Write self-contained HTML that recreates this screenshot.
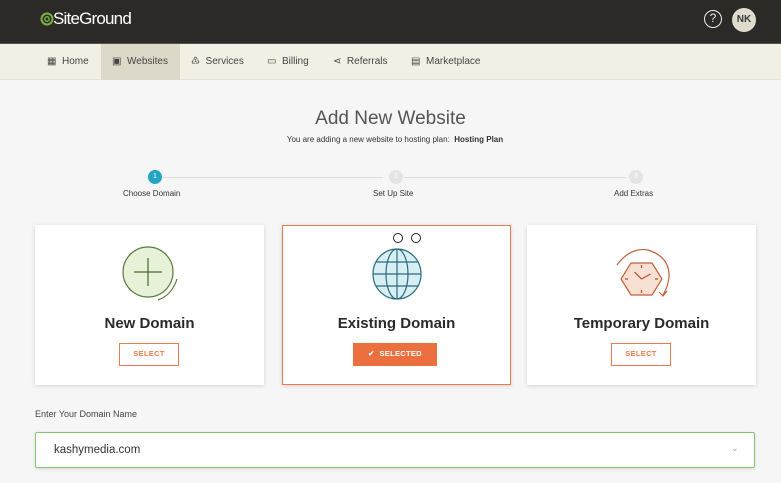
<!DOCTYPE html>
<html><head><meta charset="utf-8"><style>
*{margin:0;padding:0;box-sizing:border-box}
body{width:781px;height:483px;overflow:hidden;background:#f6f6f6;font-family:"Liberation Sans",sans-serif;position:relative;color:#333}
.hdr{position:absolute;left:0;top:0;width:781px;height:43px;background:#2b2a27}
.nav{position:absolute;left:0;top:43px;width:781px;height:37px;background:#f2f0e4;border-top:1px solid #555;border-bottom:1px solid #e6e4d8}
.nav .it{position:absolute;top:0;height:36px;line-height:35px;font-size:10px;color:#444}
.act{position:absolute;left:101px;top:0;width:79px;height:36px;background:#dcd9c8}
.abs{position:absolute}
.card{position:absolute;top:225px;width:229px;height:160px;background:#fff;box-shadow:0 1px 4px rgba(0,0,0,.15)}
.card h3{position:absolute;top:90px;width:100%;text-align:center;font-size:15px;font-weight:bold;color:#2a2a2a}
.btn{position:absolute;top:118px;height:23px;border:1.5px solid #ec7a4f;color:#ec7a4f;font-size:7.5px;font-weight:bold;text-align:center;line-height:20px;letter-spacing:.3px}
.card svg{position:absolute;top:20px;left:50%;margin-left:-30px}
</style></head><body>
<div class="hdr">
<svg class="abs" style="left:40px;top:10px" width="14" height="18" viewBox="0 0 14 18"><circle cx="7" cy="9" r="5.5" fill="none" stroke="#7cb342" stroke-width="2"/><circle cx="7" cy="9" r="2.2" fill="none" stroke="#7cb342" stroke-width="1.5"/></svg>
<div class="abs" style="left:53px;top:9px;color:#fff;font-size:17px;letter-spacing:-.8px;font-weight:300">SiteGround</div>
<div class="abs" style="left:704px;top:10px;width:18px;height:18px;border:1.5px solid #eee;border-radius:50%;color:#eee;font-size:12px;text-align:center;line-height:15px">?</div>
<div class="abs" style="left:732px;top:8px;width:24px;height:24px;border-radius:50%;background:#e0dccd;color:#3a3a3a;font-size:10px;font-weight:bold;text-align:center;line-height:24px">NK</div>
</div>
<div class="nav">
<div class="act"></div>
<div class="it" style="left:47px">▦&nbsp; Home</div>
<div class="it" style="left:112px">▣&nbsp; Websites</div>
<div class="it" style="left:191px">♳&nbsp; Services</div>
<div class="it" style="left:267px">▭&nbsp; Billing</div>
<div class="it" style="left:333px">⋖&nbsp; Referrals</div>
<div class="it" style="left:411px">▤&nbsp; Marketplace</div>
</div>
<div class="abs" style="left:0;top:108px;width:781px;text-align:center;font-size:19px;color:#555;font-weight:300">Add New Website</div>
<div class="abs" style="left:0;top:135px;width:790px;text-align:center;font-size:8px;color:#333">You are adding a new website to hosting plan:&nbsp; <b>Hosting Plan</b></div>
<div class="abs" style="left:163px;top:177px;width:220px;height:1px;background:#ddd"></div>
<div class="abs" style="left:404px;top:177px;width:222px;height:1px;background:#ddd"></div>
<div class="abs" style="left:148px;top:170px;width:14px;height:14px;border-radius:50%;background:#23a6c4;color:#fff;font-size:7px;text-align:center;line-height:14px">1</div>
<div class="abs" style="left:389px;top:170px;width:14px;height:14px;border-radius:50%;background:#e4e4e4;color:#fff;font-size:7px;text-align:center;line-height:14px">2</div>
<div class="abs" style="left:629px;top:170px;width:14px;height:14px;border-radius:50%;background:#e4e4e4;color:#fff;font-size:7px;text-align:center;line-height:14px">3</div>
<div class="abs" style="left:123px;top:189px;font-size:8px">Choose Domain</div>
<div class="abs" style="left:373px;top:189px;font-size:8px">Set Up Site</div>
<div class="abs" style="left:614px;top:189px;font-size:8px">Add Extras</div>

<div class="card" style="left:35px">
<svg width="66" height="66" viewBox="0 0 66 66"><circle cx="28" cy="27" r="25" fill="#e8f2d8" stroke="#5a7a3a" stroke-width="1.2"/><path d="M28 13v28M14 27h28" stroke="#4a6a2a" stroke-width="1.2"/><path d="M57 34 Q52 50 38 55" fill="none" stroke="#5a7a3a" stroke-width="1.2"/></svg>
<h3>New Domain</h3>
<div class="btn" style="left:84px;width:60px">SELECT</div>
</div>
<div class="card" style="left:282px;border:1.5px solid #ec7a4f">
<svg width="60" height="60" viewBox="0 0 60 60" style="top:21px"><ellipse cx="30" cy="27" rx="24" ry="25" fill="#d6eef4" stroke="#2c6c7c" stroke-width="1.2"/><ellipse cx="30" cy="27" rx="11" ry="25" fill="none" stroke="#2c6c7c" stroke-width="1.2"/><path d="M30 2v50M9 15h42M6 27h48M9 39h42" stroke="#2c6c7c" stroke-width="1.2"/></svg>
<div class="abs" style="left:110px;top:7px;width:10px;height:10px;border:1px solid #222;border-radius:50%"></div>
<div class="abs" style="left:128px;top:7px;width:10px;height:10px;border:1px solid #222;border-radius:50%"></div>
<h3 style="top:89px">Existing Domain</h3>
<div class="btn" style="left:70px;top:117px;width:84px;background:#ec6f3f;color:#fff;border-color:#ec6f3f">✔ &nbsp;SELECTED</div>
</div>
<div class="card" style="left:527px">
<svg width="62" height="62" viewBox="0 0 62 62"><path d="M19 18h21l10 16-10 16H19L9 34z" fill="#f9e0d4" stroke="#c0603a" stroke-width="1.2"/><path d="M29.5 34l-7-7M29.5 34l9-5M29.5 20v3M29.5 48v-3M13 34h3M46 34h-3" stroke="#b05030" stroke-width="1.2"/><path d="M5 20 Q18 2 36 5 Q58 12 57 32 Q56 42 51 50" fill="none" stroke="#c0603a" stroke-width="1.2"/><path d="M47 47l4 4 4-5" fill="none" stroke="#c0603a" stroke-width="1.2"/></svg>
<h3>Temporary Domain</h3>
<div class="btn" style="left:84px;width:60px">SELECT</div>
</div>

<div class="abs" style="left:35px;top:409px;font-size:9px;color:#444">Enter Your Domain Name</div>
<div class="abs" style="left:35px;top:432px;width:720px;height:36px;background:#fff;border:1px solid #8bc572;border-radius:2px;box-shadow:0 1px 3px rgba(0,0,0,.12)">
<div class="abs" style="left:18px;top:11px;font-size:11.5px;color:#333">kashymedia.com</div>
<div class="abs" style="left:695px;top:10px;font-size:9px;color:#999">⌄</div>
</div>
</body></html>
